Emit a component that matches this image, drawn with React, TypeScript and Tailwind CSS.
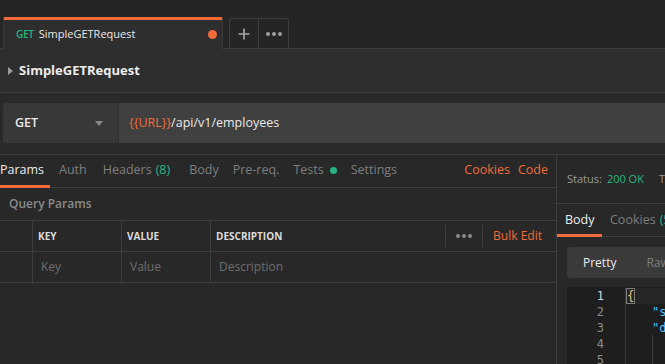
import React from "react";

const font = { fontFamily: '"Open Sans", "Noto Sans", sans-serif' };

export default function App() {
  return (
    <div className="w-[665px] h-[364px] overflow-hidden bg-[#282828] text-[#e6e6e6] flex flex-col" style={font}>
      {/* Top tab bar */}
      <div className="h-[49px] shrink-0 bg-[#252525] flex items-end border-b border-[#3d3d3d] relative">
        <div className="ml-[3px] w-[220px] h-[32px] -mb-px bg-[#2e2e2e] border-t-[3px] border-[#f26b3a] border-l border-r border-l-[#3a3a3a] border-r-[#3a3a3a] rounded-t-[2px] flex items-center pl-[12px] pr-[5px]">
          <span className="text-[10px] font-semibold text-[#27b584] mr-[5px] tracking-tight">GET</span>
          <span className="text-[11px] text-[#e8e8e8]">SimpleGETRequest</span>
          <span className="ml-auto w-[9px] h-[9px] rounded-full bg-[#f26b3a]" />
        </div>
        <div className="ml-[6px] mb-0 h-[30px] flex border border-b-0 border-[#3d3d3d] rounded-t-[3px] self-end">
          <div className="w-[29px] flex items-center justify-center border-r border-[#3d3d3d]">
            <svg width="12" height="12" viewBox="0 0 12 12"><path d="M6 0.5v11M0.5 6h11" stroke="#a8a8a8" strokeWidth="1.6" /></svg>
          </div>
          <div className="w-[29px] flex items-center justify-center gap-[2px]">
            <span className="w-[4px] h-[4px] rounded-full bg-[#a0a0a0]" />
            <span className="w-[4px] h-[4px] rounded-full bg-[#a0a0a0]" />
            <span className="w-[4px] h-[4px] rounded-full bg-[#a0a0a0]" />
          </div>
        </div>
      </div>

      {/* Request name row */}
      <div className="h-[44px] shrink-0 bg-[#2e2e2e] border-b border-[#3d3d3d] flex items-center pl-[8px]">
        <svg width="5" height="8" viewBox="0 0 5 8" className="mr-[6px]"><path d="M0 0L5 4L0 8Z" fill="#9a9a9a" /></svg>
        <span className="text-[13px] font-bold text-[#ececec]">SimpleGETRequest</span>
      </div>

      {/* URL row */}
      <div className="h-[61px] shrink-0 bg-[#2a2a2a] pt-[10px] pl-[3px]">
        <div className="h-[40px] flex rounded-l-[3px] overflow-hidden">
          <div className="w-[116px] bg-[#383838] flex items-center pl-[12px] pr-[12px] border-r border-[#2f2f2f]">
            <span className="text-[12.5px] font-semibold text-[#e8e8e8]">GET</span>
            <svg width="8" height="5" viewBox="0 0 8 5" className="ml-auto mr-[3px]"><path d="M0 0H8L4 5Z" fill="#8a8a8a" /></svg>
          </div>
          <div className="flex-1 bg-[#404040] flex items-center pl-[10px] text-[12.5px]">
            <span className="text-[#f26b3a]">{"{{URL}}"}</span>
            <span className="text-[#e8e8e8]">/api/v1/employees</span>
          </div>
        </div>
      </div>

      {/* Main */}
      <div className="flex-1 flex border-t border-[#3d3d3d] bg-[#282828]">
        {/* Left */}
        <div className="w-[557px] shrink-0 border-r border-[#3d3d3d] flex flex-col">
          <div className="h-[33px] shrink-0 border-b border-[#3d3d3d] flex items-stretch text-[12.5px] text-[#7e7e7e] pr-[8px] pb-[1px]">
            <div className="relative flex items-center w-[50px] text-[#ececec]">
              Params
              <span className="absolute left-0 bottom-[-2px] w-[50px] h-[3px] bg-[#f26b3a]" />
            </div>
            <div className="flex items-center ml-[9px]">Auth</div>
            <div className="flex items-center ml-[16px]">Headers <span className="ml-[4px] text-[#27b584]">(8)</span></div>
            <div className="flex items-center ml-[19px]">Body</div>
            <div className="flex items-center ml-[14px]">Pre-req.</div>
            <div className="flex items-center ml-[14px]">Tests<span className="ml-[6px] w-[7px] h-[7px] rounded-full bg-[#27b584]" /></div>
            <div className="flex items-center ml-[14px]">Settings</div>
            <div className="flex items-center ml-auto text-[#f26b3a]">Cookies</div>
            <div className="flex items-center ml-[8px] text-[#f26b3a]">Code</div>
          </div>
          <div className="h-[33px] shrink-0 border-b border-[#3d3d3d] flex items-center pl-[9px] text-[12px] font-semibold text-[#8a8a8a]">Query Params</div>
          <div className="h-[31px] shrink-0 border-b border-[#3d3d3d] flex items-stretch text-[10px] font-bold text-[#dcdcdc]">
            <div className="w-[33px] border-r border-[#3d3d3d]" />
            <div className="w-[89px] border-r border-[#3d3d3d] flex items-center pl-[5px]">KEY</div>
            <div className="w-[89px] border-r border-[#3d3d3d] flex items-center pl-[5px]">VALUE</div>
            <div className="flex-1 flex items-center pl-[5px]">
              DESCRIPTION
              <div className="ml-auto h-[22px] border-l border-[#3d3d3d] w-[37px] flex items-center justify-center gap-[2px]">
                <span className="w-[4px] h-[4px] rounded-full bg-[#8a8a8a]" />
                <span className="w-[4px] h-[4px] rounded-full bg-[#8a8a8a]" />
                <span className="w-[4px] h-[4px] rounded-full bg-[#8a8a8a]" />
              </div>
              <div className="h-[22px] border-l border-[#3d3d3d] pl-[10px] pr-[14px] flex items-center text-[12px] font-normal text-[#f26b3a]">Bulk Edit</div>
            </div>
          </div>
          <div className="h-[31px] shrink-0 border-b border-[#3d3d3d] flex items-stretch text-[12px] text-[#6e6e6e]">
            <div className="w-[33px] border-r border-[#3d3d3d]" />
            <div className="w-[89px] border-r border-[#3d3d3d] flex items-center pl-[8px]">Key</div>
            <div className="w-[89px] border-r border-[#3d3d3d] flex items-center pl-[8px]">Value</div>
            <div className="flex-1 flex items-center pl-[8px]">Description</div>
          </div>
        </div>

        {/* Right */}
        <div className="flex-1 min-w-0 flex flex-col overflow-hidden">
          <div className="h-[49px] shrink-0 border-b border-[#3d3d3d] flex items-center pl-[10px] text-[11px] whitespace-nowrap">
            <span className="text-[#9a9a9a] shrink-0">Status:</span>
            <span className="ml-[5px] text-[#27b584] shrink-0">200 OK</span>
            <span className="ml-[15px] text-[#9a9a9a] shrink-0">Time</span>
          </div>
          <div className="h-[33px] shrink-0 border-b border-[#3d3d3d] flex items-stretch text-[12.5px] whitespace-nowrap">
            <div className="relative w-[45px] shrink-0 flex items-center pl-[8px] text-[#ececec]">
              Body
              <span className="absolute left-0 bottom-[-1px] w-[45px] h-[3px] bg-[#f26b3a]" />
            </div>
            <div className="flex items-center shrink-0 ml-[8px] text-[#7e7e7e]">Cookies <span className="ml-[4px] text-[#27b584]">(5)</span></div>
          </div>
          <div className="pl-[10px] pt-[10px]">
            <div className="h-[31px] bg-[#3a3a3a] rounded-l-[3px] flex items-center pl-[16px] text-[12px] whitespace-nowrap">
              <span className="text-[#ececec] shrink-0">Pretty</span>
              <span className="ml-[30px] text-[#7e7e7e] shrink-0">Raw</span>
            </div>
          </div>
          <div className="ml-[10px] mt-[9px] flex-1 bg-[#1e1e1e] flex text-[12px] leading-[16px]" style={{ fontFamily: '"DejaVu Sans Mono", "Liberation Mono", monospace' }}>
            <div className="w-[59px] shrink-0 pt-[1px] pr-[21px] text-right text-[#8a8a8a] border-r border-[#3a3a3a]">
              <div className="text-[#d6d6d6]">1</div>
              <div>2</div>
              <div>3</div>
              <div>4</div>
              <div>5</div>
            </div>
            <div className="flex-1 pt-[1px] relative whitespace-pre">
              <div className="bg-[#262626] flex"><span className="text-[#e5c07b] border border-[#7a7a7a] leading-[14px]">{"{"}</span></div>
              <div className="text-[#4fc1ff] pl-[26px]">"s</div>
              <div className="text-[#4fc1ff] pl-[26px]">"d</div>
              <div className="absolute left-[26px] top-[48px] w-px h-[40px] bg-[#3a3a3a]" />
            </div>
          </div>
        </div>
      </div>
    </div>
  );
}
